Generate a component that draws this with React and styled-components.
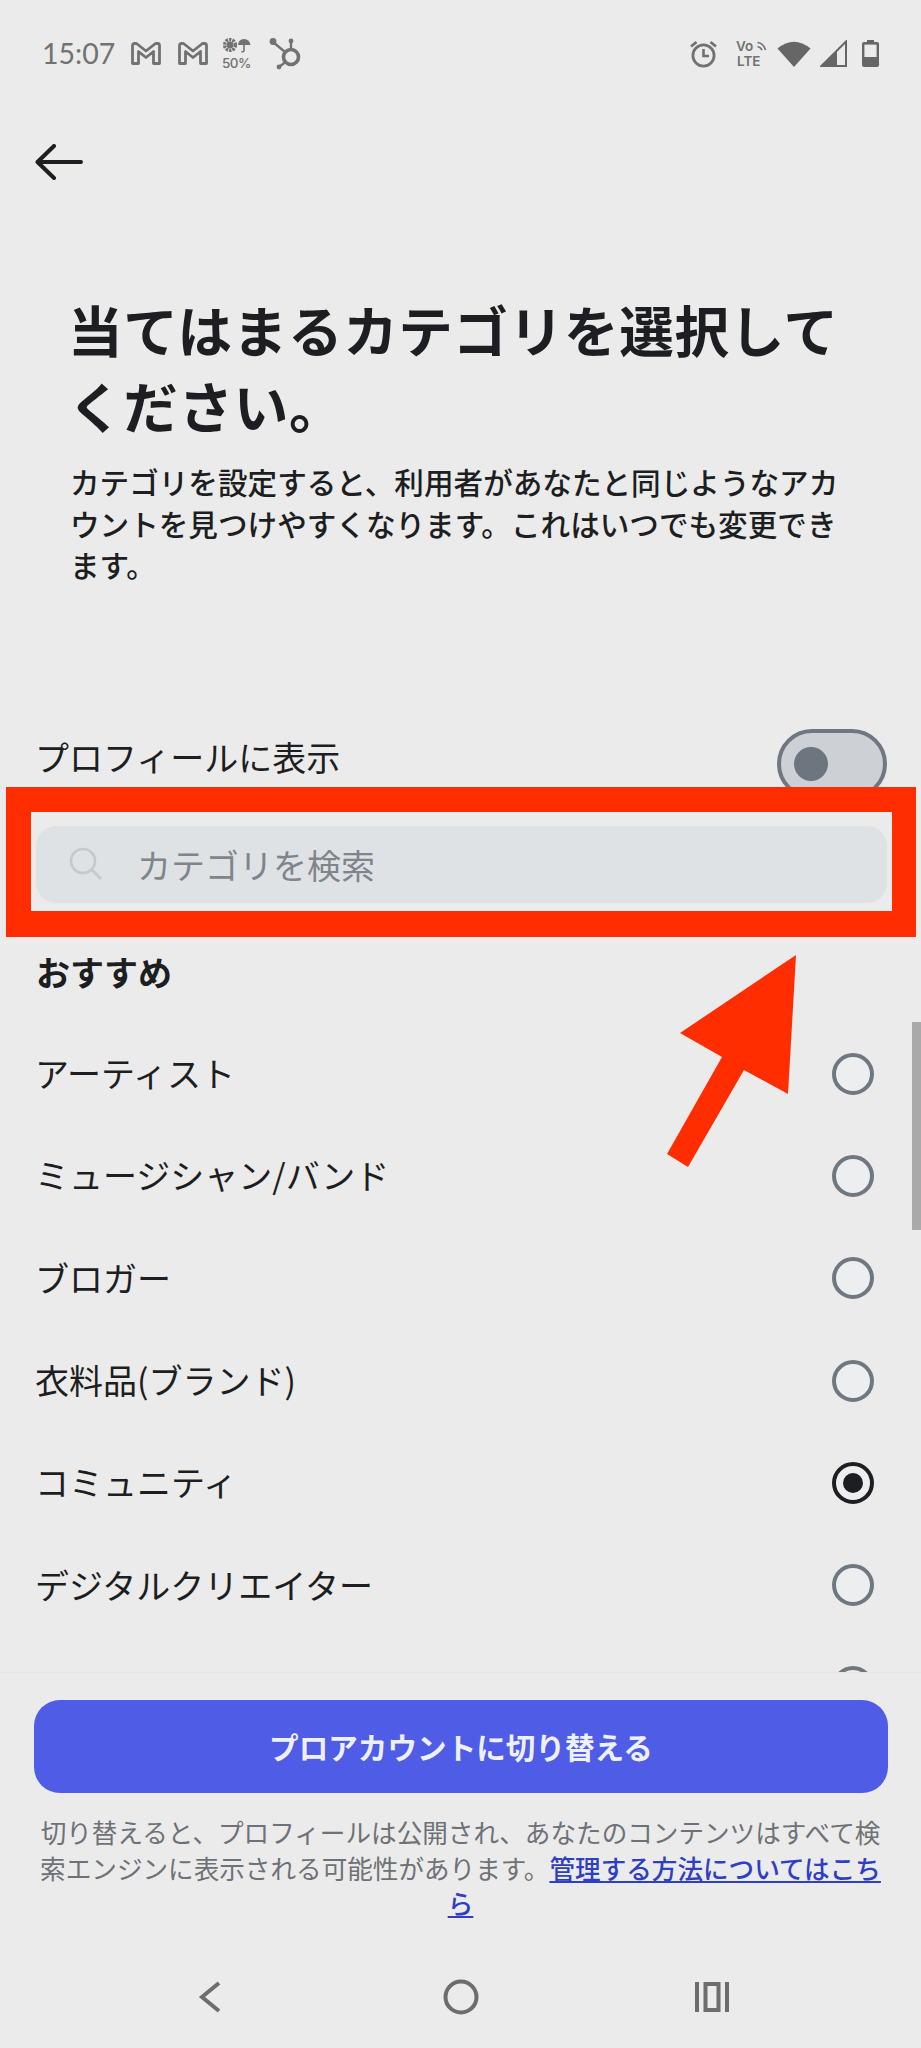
import React from "react";
import styled, { createGlobalStyle } from "styled-components";

const GlobalStyle = createGlobalStyle`
  html, body {
    margin: 0;
    padding: 0;
    background: #ebebeb;
  }
  * {
    box-sizing: border-box;
  }
`;

// the last row is cut by the footer, only the top of its radio shows
const CATEGORIES = [
  { name: "アーティスト" },
  { name: "ミュージシャン/バンド" },
  { name: "ブロガー" },
  { name: "衣料品(ブランド)" },
  { name: "コミュニティ", selected: true },
  { name: "デジタルクリエイター" },
  { name: "" },
];

function GmailIcon() {
  return (
    <svg width="30" height="23" viewBox="0 0 30 23">
      <path
        d="M1.5 21.5V3.5Q1.5 1.5 3.5 1.5H5.5L15 9L24.5 1.5H26.5Q28.5 1.5 28.5 3.5V21.5H22.5V9.5L15 15.5L7.5 9.5V21.5Z"
        fill="none"
        stroke="#727272"
        strokeWidth="2.8"
        strokeLinejoin="round"
      />
    </svg>
  );
}

function WeatherIcon() {
  return (
    <svg width="34" height="34" viewBox="0 0 34 34">
      <circle cx="8" cy="8" r="5.4" fill="none" stroke="#727272" strokeWidth="3.4" strokeDasharray="2.4 1" />
      <circle cx="8" cy="8" r="3.4" fill="#727272" />
      <path d="M16 8Q16.5 2 22 2Q27.5 2 28.5 8Z" fill="#727272" />
      <path d="M22 7V13Q22 15.5 19.5 14.5" fill="none" stroke="#727272" strokeWidth="1.6" />
      <text x="0" y="31" fontFamily="Inter, sans-serif" fontSize="13.5" fontWeight="500" letterSpacing="-0.5" fill="#727272">50%</text>
    </svg>
  );
}

function HubspotIcon() {
  return (
    <svg width="33" height="33" viewBox="0 0 33 33">
      <circle cx="22" cy="20" r="7.5" fill="none" stroke="#727272" strokeWidth="3.6" />
      <path d="M22 12V4M16 15L4 5M16.5 25L10 30" stroke="#727272" strokeWidth="2.4" fill="none" />
      <circle cx="22" cy="4" r="2.4" fill="#727272" />
      <circle cx="4" cy="4.5" r="3.4" fill="#727272" />
      <circle cx="10" cy="30" r="2.4" fill="#727272" />
    </svg>
  );
}

function AlarmIcon() {
  return (
    <svg width="27" height="28" viewBox="0 0 27 28">
      <circle cx="13.5" cy="15.5" r="10.6" fill="none" stroke="#727272" strokeWidth="2.8" />
      <path d="M13.5 9V16H19" fill="none" stroke="#727272" strokeWidth="2.6" />
      <path d="M1 6.5L6.5 2M26 6.5L20.5 2" stroke="#727272" strokeWidth="2.8" />
    </svg>
  );
}

function VolteIcon() {
  return (
    <svg width="32" height="32" viewBox="0 0 32 32">
      <text x="0" y="13" fontFamily="Inter, sans-serif" fontSize="13.5" fontWeight="600" fill="#727272">Vo</text>
      <text x="1" y="28" fontFamily="Inter, sans-serif" fontSize="13.5" fontWeight="600" fill="#727272">LTE</text>
      <path d="M21.5 4.5Q27.5 5 29.5 12M21.5 8.5Q24.5 9 26 12" fill="none" stroke="#727272" strokeWidth="1.7" />
    </svg>
  );
}

function WifiIcon() {
  return (
    <svg width="34" height="27" viewBox="0 0 34 27">
      <path d="M0.5 8.5Q17 -5 33.5 8.5L17 27Z" fill="#666" />
    </svg>
  );
}

function SignalIcon() {
  return (
    <svg width="27" height="27" viewBox="0 0 27 27">
      <path d="M26 1.5V26H1.5Z" fill="none" stroke="#666" strokeWidth="2" />
      <path d="M1 27L17 11V27Z" fill="#666" />
    </svg>
  );
}

function BatteryIcon() {
  return (
    <svg width="17" height="27" viewBox="0 0 17 27">
      <path d="M5 0H12V2H15Q17 2 17 4V25Q17 27 15 27H2Q0 27 0 25V4Q0 2 2 2H5Z" fill="#666" />
      <rect x="2.4" y="4.6" width="12.2" height="12.4" fill="#ebebeb" />
    </svg>
  );
}

export default function App() {
  return (
    <Page>
      <GlobalStyle />
      <StatusBar>
        <StatusGroup>
          <Clock>15:07</Clock>
          <GmailIcon />
          <StatusSlot $after={14}>
            <GmailIcon />
          </StatusSlot>
          <StatusSlot $after={13}>
            <WeatherIcon />
          </StatusSlot>
          <HubspotIcon />
        </StatusGroup>
        <StatusGroup>
          <StatusSlot $after={19}>
            <AlarmIcon />
          </StatusSlot>
          <StatusSlot $after={9}>
            <VolteIcon />
          </StatusSlot>
          <StatusSlot $after={9}>
            <WifiIcon />
          </StatusSlot>
          <StatusSlot $after={15}>
            <SignalIcon />
          </StatusSlot>
          <StatusSlot>
            <BatteryIcon />
          </StatusSlot>
        </StatusGroup>
      </StatusBar>

      <Main>
        <BackButton>
          <svg width="48" height="36" viewBox="0 0 48 36">
            <path
              d="M2.5 18H46M19 2L2.5 18L19 34"
              fill="none"
              stroke="#1c1e21"
              strokeWidth="4"
              strokeLinecap="round"
              strokeLinejoin="round"
            />
          </svg>
        </BackButton>

        <Heading>
          <Title>当てはまるカテゴリを選択してください。</Title>
          <Description>
            カテゴリを設定すると、利用者があなたと同じようなアカウントを見つけやすくなります。これはいつでも変更できます。
          </Description>
        </Heading>

        <ToggleRow>
          <ToggleLabel>プロフィールに表示</ToggleLabel>
          <Toggle>
            <Knob />
          </Toggle>
        </ToggleRow>

        <SearchField>
          <svg width="34" height="34" viewBox="0 0 34 34">
            <circle cx="14" cy="14" r="12" fill="none" stroke="#c3c9cc" strokeWidth="2.6" />
            <path d="M23 23L32 32" stroke="#c3c9cc" strokeWidth="3" />
          </svg>
          <SearchText>カテゴリを検索</SearchText>
        </SearchField>

        <SectionTitle>おすすめ</SectionTitle>

        <List>
          {CATEGORIES.map((item, i) => (
            <Row key={i}>
              <RowLabel>{item.name}</RowLabel>
              <Radio $selected={item.selected} />
            </Row>
          ))}
        </List>
      </Main>

      <Footer>
        <SwitchButton>プロアカウントに切り替える</SwitchButton>
        <Note>
          切り替えると、プロフィールは公開され、あなたのコンテンツはすべて検索エンジンに表示される可能性があります。
          <NoteLink href="#">管理する方法についてはこちら</NoteLink>
        </Note>
        <NavBar>
          <NavItem>
            <svg width="24" height="32" viewBox="0 0 24 32">
              <path d="M21 2L4 16L21 30" fill="none" stroke="#6d6d6d" strokeWidth="4" />
            </svg>
          </NavItem>
          <NavItem>
            <svg width="36" height="36" viewBox="0 0 36 36">
              <circle cx="18" cy="18" r="15.5" fill="none" stroke="#6d6d6d" strokeWidth="4" />
            </svg>
          </NavItem>
          <NavItem>
            <svg width="36" height="32" viewBox="0 0 36 32">
              <path d="M3 1V31M33 1V31" stroke="#6d6d6d" strokeWidth="4" />
              <rect x="11.5" y="3" width="13" height="26" fill="none" stroke="#6d6d6d" strokeWidth="4" />
            </svg>
          </NavItem>
        </NavBar>
      </Footer>

      <Scrollbar />
      <RedFrame />
      <RedArrow viewBox="0 0 921 2048">
        <polygon points="796,955 680,1033 722,1057 667,1154 688,1167 744,1070 788,1094" fill="#ff2d00" />
      </RedArrow>
    </Page>
  );
}

const Page = styled.div`
  position: relative;
  width: 921px;
  height: 2048px;
  overflow: hidden;
  display: flex;
  flex-direction: column;
  background: #ebebeb;
  color: #1c1e21;
  font-family: "Noto Sans CJK JP", "Noto Sans", sans-serif;
`;

const StatusBar = styled.div`
  height: 100px;
  padding: 37px 42px 0;
  display: flex;
  justify-content: space-between;
  align-items: flex-start;
`;

const StatusGroup = styled.div`
  display: flex;
  align-items: center;
  gap: 17px;
  height: 33px;
`;

const StatusSlot = styled.div`
  display: flex;
  margin-right: ${(p) => (p.$after || 0) - 17}px;

  &:last-child {
    margin-right: 0;
  }
`;

const Clock = styled.span`
  font-family: "Lato", sans-serif;
  font-size: 28.5px;
  line-height: 33px;
  color: #727272;
  margin-right: -1px;
`;

const Main = styled.div`
  flex: 1;
  min-height: 0;
  overflow: hidden;
`;

const BackButton = styled.div`
  height: 36px;
  margin: 44px 0 0 35px;
`;

const Heading = styled.div`
  margin-top: 111px;
  padding: 0 71px 0 68px;
`;

const Title = styled.h1`
  margin: 0;
  font-size: 54.6px;
  line-height: 76px;
  font-weight: 700;
  letter-spacing: 0.65px;
`;

const Description = styled.p`
  margin: 18px 0 0 2px;
  font-size: 29.6px;
  line-height: 41.5px;
  font-weight: 500;
`;

const ToggleRow = styled.div`
  margin-top: 143px;
  padding: 0 34px 0 35px;
  height: 70px;
  display: flex;
  justify-content: space-between;
  align-items: center;
`;

const RowLabel = styled.span`
  font-size: 34px;
  line-height: 44px;
  font-weight: 400;
  padding-bottom: 1px;
`;

const ToggleLabel = styled(RowLabel)`
  padding-bottom: 0;
  margin-bottom: 14px;
`;

const Toggle = styled.div`
  width: 110px;
  height: 70px;
  border: 4px solid #6f7780;
  border-radius: 35px;
  background: #cdd1d6;
  display: flex;
  align-items: center;
  padding-left: 13px;
`;

const Knob = styled.div`
  width: 34px;
  height: 34px;
  border-radius: 50%;
  background: #6d757f;
`;

const SearchField = styled.div`
  margin: 27px 34px 0 36px;
  height: 77px;
  border-radius: 20px;
  background: #dfe2e5;
  display: flex;
  align-items: center;
  gap: 34px;
  padding-left: 33px;
`;

const SearchText = styled.span`
  font-size: 34px;
  color: #7f858b;
`;

const SectionTitle = styled.h2`
  margin: 46px 0 0 36px;
  font-size: 34px;
  line-height: 46px;
  font-weight: 700;
`;

const List = styled.div`
  margin-top: 28px;
`;

const Row = styled.div`
  height: 102.3px;
  padding: 0 47px 0 35px;
  display: flex;
  justify-content: space-between;
  align-items: center;
`;

const Radio = styled.div`
  width: 42px;
  height: 42px;
  border-radius: 50%;
  border: 4px solid ${(p) => (p.$selected ? "#1c1e21" : "#6f7780")};
  background: #edeef0;
  display: flex;
  align-items: center;
  justify-content: center;

  &::after {
    content: "";
    display: ${(p) => (p.$selected ? "block" : "none")};
    width: 20px;
    height: 20px;
    border-radius: 50%;
    background: #1c1e21;
  }
`;

const Footer = styled.div`
  height: 376px;
  border-top: 1px solid #e5e5e5;
  padding-top: 27px;
  display: flex;
  flex-direction: column;
`;

const SwitchButton = styled.div`
  margin: 0 33px 0 34px;
  height: 93px;
  border-radius: 26px;
  background: #4f5de6;
  color: #eef0fc;
  display: flex;
  align-items: center;
  justify-content: center;
  font-size: 29.6px;
  font-weight: 700;
`;

const Note = styled.p`
  margin: 21px 33px 0;
  font-size: 25.6px;
  line-height: 35.5px;
  text-align: center;
  color: #6e7276;
`;

const NoteLink = styled.a`
  color: #2f3fc4;
  font-weight: 500;
  text-decoration: underline;
`;

const NavBar = styled.div`
  margin-top: 58px;
  display: grid;
  grid-template-columns: repeat(3, 251px);
  justify-content: center;
`;

const NavItem = styled.div`
  height: 36px;
  display: flex;
  align-items: center;
  justify-content: center;
`;

const Scrollbar = styled.div`
  position: absolute;
  top: 1022px;
  right: 0;
  width: 9px;
  height: 208px;
  background: #a9a9a9;
`;

const RedFrame = styled.div`
  position: absolute;
  left: 6px;
  top: 787px;
  width: 910px;
  height: 150px;
  border-style: solid;
  border-color: #ff2d00;
  border-width: 25px 24px 26px 25px;
`;

const RedArrow = styled.svg`
  position: absolute;
  inset: 0;
  width: 921px;
  height: 2048px;
  pointer-events: none;
`;
